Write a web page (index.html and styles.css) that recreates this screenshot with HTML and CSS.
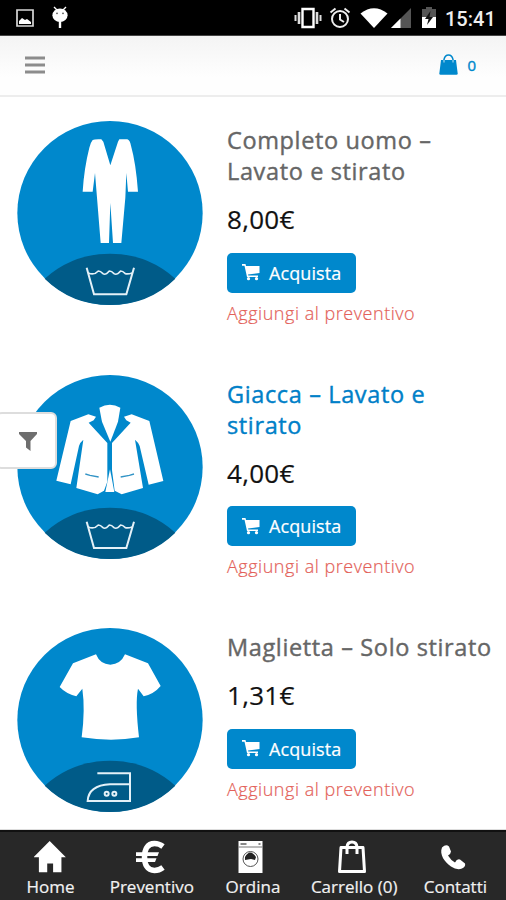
FILE: index.html
```html
<!DOCTYPE html>
<html lang="it">
<head>
<meta charset="utf-8">
<title>Lavanderia</title>
<link rel="stylesheet" href="styles.css">
</head>
<body>
<div class="status">
  <div class="status-left">
    <svg width="18" height="18" viewBox="0 0 18 18"><path d="M1 1h16v16H1z" fill="none" stroke="#d8d8d8" stroke-width="1.7"/><path d="M3 15v-3l3-3 3 2 2-1 4 3v2z" fill="#fff"/></svg>
    <svg width="18" height="24" viewBox="0 0 18 24"><path d="M3 1l3 3M15 1l-3 3" stroke="#fff" stroke-width="1.4"/><ellipse cx="9" cy="9.3" rx="7.6" ry="6.7" fill="#fff"/><path d="M9 15v7" stroke="#fff" stroke-width="2.4"/><circle cx="6" cy="7.3" r=".9" fill="#555"/><circle cx="12" cy="7.3" r=".9" fill="#555"/></svg>
  </div>
  <svg class="ic-vibrate" width="28" height="22" viewBox="0 0 28 22"><path d="M8.500 2h11v18h-11z" fill="none" stroke="#fff" stroke-width="2.4"/><path d="M5 5v12M23 5v12" stroke="#ddd" stroke-width="2.6"/><path d="M1.500 8v6M26.500 8v6" stroke="#ddd" stroke-width="2"/></svg>
  <svg class="ic-alarm" width="22" height="22" viewBox="0 0 22 22"><g fill="none" stroke="#eee" stroke-width="2"><circle cx="11" cy="12" r="8"/><path d="M11 7v5.500l4 2.500M1.500 5.500l5-4M20.500 5.500l-5-4"/></g></svg>
  <svg class="ic-wifi" width="28" height="20" viewBox="0 0 28 20"><path d="M.5 5.500Q14-5 27.500 5.500L14 20z" fill="#fff"/></svg>
  <svg class="ic-signal" width="20" height="20" viewBox="0 0 20 20"><path d="M20 0v20H0z" fill="#555"/><path d="M9.500 10.500V20H0z" fill="#fff"/></svg>
  <svg class="ic-battery" width="14" height="21" viewBox="0 0 14 21"><path d="M0 2h4V0h6v2h4v9H0z" fill="#555"/><path d="M0 10h14v11H0z" fill="#fff"/><path d="M8.500 4L3 12h3.500L5 18l6-8H7.500z" fill="#111"/></svg>
  <span class="clock">15:41</span>
</div>
<header class="header">
  <svg width="20" height="18" viewBox="0 0 20 18"><path d="M0 2h20M0 9h20M0 16h20" stroke="#8c8c8c" stroke-width="3.200"/></svg>
  <div class="bag">
    <svg width="19" height="21" viewBox="0 0 19 21"><path d="M2 6h15l1.700 13.500q0 1.200-1.200 1.200H1.500Q.3 20.700.3 19.500z" fill="#0088cc"/><path d="M5 8V5.500Q6 1 9.500 1T14 5.500V8" fill="none" stroke="#0088cc" stroke-width="1.500"/><path d="M5 6v2.500M14 6v2.500" stroke="#bfe3f5" stroke-width="1"/></svg>
    <span>0</span>
  </div>
</header>
<main class="list">
  <article class="item">
    <svg class="pic" viewBox="51 32 558 552"><ellipse cx="330" cy="308" rx="278" ry="276" fill="#0088cc"/><path d="M134 505Q218 430 330 430T526 505Q445 584 330 584T134 505z" fill="#005b88"/>
      <path d="M278 89Q284 86 304 87L310 94 331 165 354 94 358 87H382Q390 90 393 106Q408 160 414 244H384L379 188 376 262 364 398H339L331 278 327 398H302L291 262 285 188 278 244H248Q252 175 268 112 272 96 278 89z" fill="#fff"/>
      <g fill="none" stroke="#e4f1f8" stroke-width="6"><path d="M260 472L282 552H379L402 472"/><path d="M265 488Q282 496 295 482 301 482 309 490 316 496 328 482 335 482 342 490 350 496 362 482 368 482 376 490 383 492 397 488" stroke-width="5"/></g></svg>
    <div class="info">
      <h2>Completo uomo – Lavato e stirato</h2>
      <div class="price">8,00€</div>
      <button class="buy"><svg width="18" height="17" viewBox="0 0 18 17"><path d="M0 0h3.500L4 2h13.500v7L6 10.500l.3 1H16V13H5L2.500 1.800H0z" fill="#fff"/><circle cx="6.500" cy="14.700" r="1.600" fill="#fff"/><circle cx="14.500" cy="14.700" r="1.600" fill="#fff"/></svg><span>Acquista</span></button>
      <a class="quote">Aggiungi al preventivo</a>
    </div>
  </article>
  <article class="item">
    <svg class="pic" viewBox="51 32 558 552"><ellipse cx="330" cy="308" rx="278" ry="276" fill="#0088cc"/><path d="M134 505Q218 430 330 430T526 505Q445 584 330 584T134 505z" fill="#005b88"/>
      <g fill="#fff"><path d="M298 130Q330 113 361 130L354 172 331 232 306 172z"/><path d="M212 170L265 150 288 157 281 168 266 175 322 236V352L312 379 293 390 229 371 250 226Q241 233 237 245L212 360 169 349z"/><path d="M448 170L395 150 372 157 379 168 392 175 336 236V318L344 379 365 390 429 371 405 226Q414 233 419 245L446 361 490 350z"/><path d="M330 315L343 383H316z"/></g>
      <path d="M256 329L270 333 296 338M402 329L388 333 362 338" fill="none" stroke="#3394c6" stroke-width="4"/>
      <g fill="none" stroke="#e4f1f8" stroke-width="6"><path d="M260 472L282 551H379L402 472"/><path d="M265 488Q282 496 295 482 301 482 309 490 316 496 328 482 335 482 342 490 350 496 362 482 368 482 376 490 383 492 397 488" stroke-width="5"/></g></svg>
    <div class="info">
      <h2 class="active">Giacca – Lavato e stirato</h2>
      <div class="price">4,00€</div>
      <button class="buy"><svg width="18" height="17" viewBox="0 0 18 17"><path d="M0 0h3.500L4 2h13.500v7L6 10.500l.3 1H16V13H5L2.500 1.800H0z" fill="#fff"/><circle cx="6.500" cy="14.700" r="1.600" fill="#fff"/><circle cx="14.500" cy="14.700" r="1.600" fill="#fff"/></svg><span>Acquista</span></button>
      <a class="quote">Aggiungi al preventivo</a>
    </div>
  </article>
  <article class="item">
    <svg class="pic" viewBox="51 25 558 552"><ellipse cx="330" cy="301" rx="278" ry="276" fill="#0088cc"/><path d="M134 498Q218 423 330 423T526 498Q445 577 330 577T134 498z" fill="#005b88"/>
      <path d="M288 104Q300 134 331 135 362 134 375 104L444 131 482 199Q462 223 431 230L414 207Q405 250 417 353 335 367 245 353 256 270 247 207L229 230Q198 222 179 202L219 131z" fill="#fff"/>
      <g fill="none" stroke="#e4f1f8" stroke-width="6"><path d="M292 461H390V544H263Q266 497 330 494H390"/><circle cx="320" cy="522" r="6"/><circle cx="343" cy="522" r="6"/></g></svg>
    <div class="info">
      <h2>Maglietta – Solo stirato</h2>
      <div class="price">1,31€</div>
      <button class="buy"><svg width="18" height="17" viewBox="0 0 18 17"><path d="M0 0h3.500L4 2h13.500v7L6 10.500l.3 1H16V13H5L2.500 1.800H0z" fill="#fff"/><circle cx="6.500" cy="14.700" r="1.600" fill="#fff"/><circle cx="14.500" cy="14.700" r="1.600" fill="#fff"/></svg><span>Acquista</span></button>
      <a class="quote">Aggiungi al preventivo</a>
    </div>
  </article>
  <div class="filter"><svg width="18" height="19" viewBox="0 0 18 19"><path d="M0 0h18v2l-6.500 7v10L7 15.500V9L0 2z" fill="#6e6e6e"/></svg></div>
</main>
<nav class="tabs">
  <a class="tab"><svg width="34" height="34" viewBox="2 0 34 34"><path d="M16.500 1L33 17.500h-4.500V33H20v-9h-6v9H5.500V17.500H0z" fill="#fff" transform="translate(1.500 0) scale(.98)"/></svg><span>Home</span></a>
  <a class="tab"><svg width="34" height="34" viewBox="0 0 34 34"><path d="M28 6.500Q24 3.500 19.500 3.500C12 3.500 9.500 10 9.500 17S12 30.500 19.500 30.500Q24 30.500 28 27.500" fill="none" stroke="#fff" stroke-width="5.500"/><path d="M1 12.300h23l-1.500 3.800H1zM1 18.300h20.500l-1.500 3.800H1z" fill="#fff"/></svg><span>Preventivo</span></a>
  <a class="tab"><svg width="34" height="34" viewBox="1.500 0 34 34"><path d="M4 1h24v32H4z" fill="#fff"/><path d="M4 7h24" stroke="#777" stroke-width="1"/><path d="M6 4h6M24 4h2" stroke="#888" stroke-width="2"/><circle cx="16" cy="19" r="7.500" fill="#fff" stroke="#555" stroke-width="1"/><path d="M10.500 17q5-9 11 0l-1 3-4-1-6 1z" fill="#222"/></svg><span>Ordina</span></a>
  <a class="tab"><svg width="34" height="34" viewBox="0 0 34 34"><g fill="none" stroke="#fff" stroke-width="3"><path d="M4 7.500h22L27.500 31.500h-25z" stroke-linejoin="round"/><path d="M10 14V7Q10.500 2 15 2T20 7v7"/></g></svg><span>Carrello (0)</span></a>
  <a class="tab"><svg width="34" height="34" viewBox="-2 .5 34 34"><path d="M2 8Q6 4 9 7L11 12Q11 14 8 16 11 21 15 23 17 19 20 20L25 24Q26 27 22 29 17 31 11 27C5 23-1 15 2 8z" fill="#fff"/></svg><span>Contatti</span></a>
</nav>
</body>
</html>
```
FILE: styles.css
```css
* { box-sizing: border-box; }
body {
  margin: 0;
  width: 506px;
  height: 900px;
  display: flex;
  flex-direction: column;
  overflow: hidden;
  background: #fff;
  font-family: "Open Sans", "Noto Sans", sans-serif;
}
svg { display: block; flex: none; }
.status {
  height: 36px;
  flex: none;
  display: flex;
  align-items: center;
  padding-right: 11px;
  background: #000;
  border-bottom: 1px solid #444;
}
.status-left { display: flex; align-items: center; gap: 17px; margin-left: 16px; margin-right: auto; }
.ic-vibrate { margin-right: 2px; }
.ic-alarm { margin-left: 5px; }
.ic-wifi { margin-left: 9px; }
.ic-signal { margin-left: 3px; }
.ic-battery { margin-left: 11px; }
.clock {
  width: 50px;
  margin-left: 9px;
  color: #eee;
  font: 500 20px/36px Roboto, sans-serif;
  padding-top: 2px;
  white-space: nowrap;
}
.header {
  height: 61px;
  flex: none;
  display: flex;
  align-items: center;
  justify-content: space-between;
  padding: 0 30px 2px 25px;
  background: linear-gradient(#f4f4f4, #fefefe 70%);
  border-bottom: 2px solid #ededed;
}
.bag { display: flex; align-items: center; gap: 9px; color: #0088cc; font-size: 15px; -webkit-text-stroke: .4px; }
.list { position: relative; flex: 1; min-height: 0; padding: 24px 0 0 17px; border-bottom: 1px solid #ddd; }
.item { display: flex; gap: 24px; height: 253.7px; }
.pic { width: 186px; height: 184px; }
.info { flex: 1; padding: 4px 10px 0 0; }
h2 { margin: 0 0 17px; color: #666; font-size: 23.5px; font-weight: 400; line-height: 31px; letter-spacing: .63px; -webkit-text-stroke: .4px; }
h2.active { color: #0080c8; }
.price { color: #111; font-size: 26px; line-height: 30px; letter-spacing: .3px; -webkit-text-stroke: .2px; }
.buy {
  display: flex;
  align-items: center;
  gap: 9px;
  width: 129px;
  height: 40px;
  margin: 18.500px 0 9px;
  padding: 0 0 0 15px;
  border: 0;
  border-radius: 5px;
  background: #0088cc;
  color: #fff;
  font: 400 18px/24px "Open Sans", sans-serif;
  letter-spacing: .1px;
  -webkit-text-stroke: .2px;
}
.quote { display: block; color: #e36159; font-size: 18px; font-weight: 300; line-height: 22px; letter-spacing: .53px; -webkit-text-stroke: .2px; }
.filter {
  position: absolute;
  left: -4px;
  top: 315px;
  width: 61px;
  height: 57px;
  padding: 18px 0 0 21px;
  background: #fff;
  border: 2px solid #ddd;
  border-radius: 6px;
}
.tabs { height: 70px; flex: none; display: grid; grid-template-columns: repeat(5, 1fr); background: #282828; border-top: 2px solid #111; }
.tab { display: flex; flex-direction: column; align-items: center; padding-top: 8px; color: #f2f2f2; font-size: 17px; line-height: 24px; white-space: nowrap; -webkit-text-stroke: .2px; }
.tab span { margin-top: 1px; }
```
